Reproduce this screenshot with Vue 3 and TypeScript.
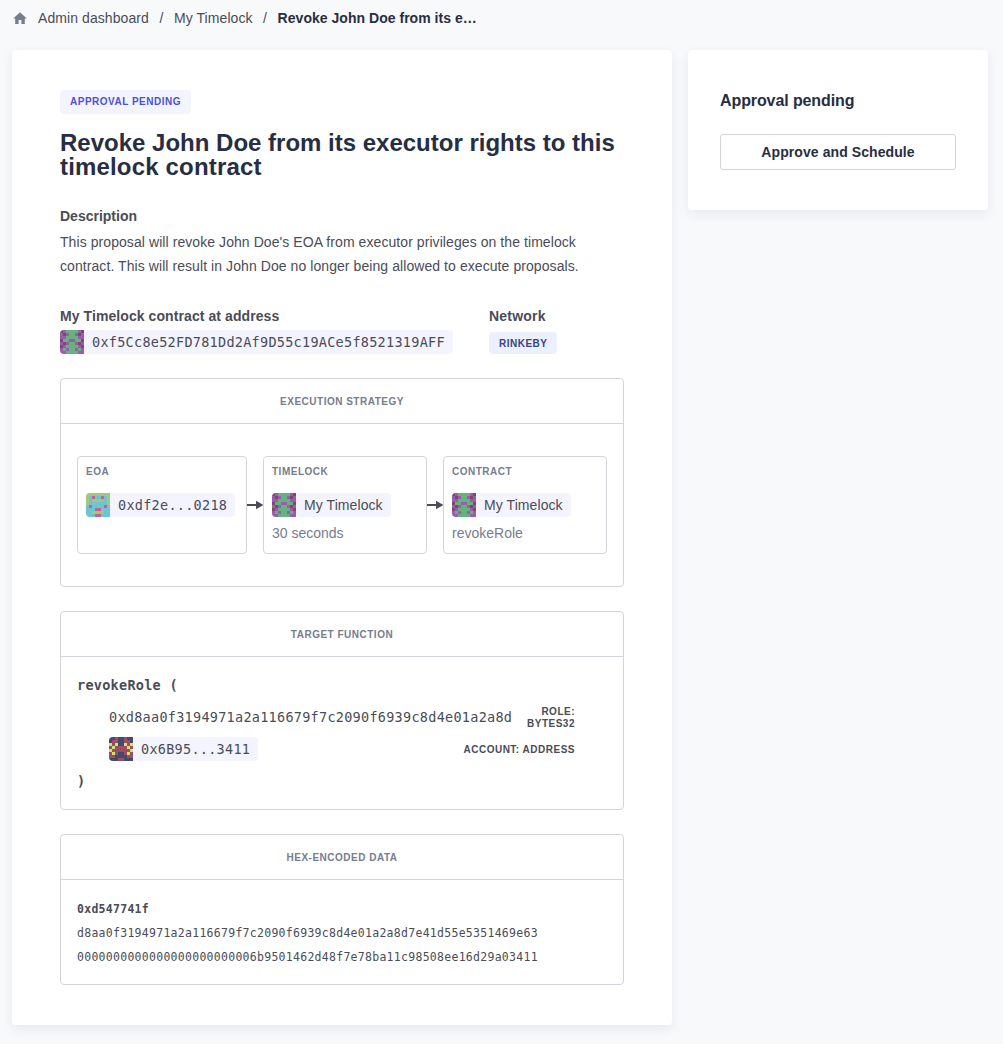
<script setup lang="ts">
import { defineComponent, h } from 'vue'

interface Pattern { colors: Record<string, string>; rows: string[] }

// Each row holds the left half of an 8x8 identicon; the right half mirrors it.
const patterns: Record<string, Pattern> = {
  timelock: {
    colors: { P: '#9a5bb0', G: '#66b27e', D: '#7c4a68' },
    rows: ['DPGG', 'PDPG', 'PPGG', 'DGGP', 'PDPG', 'DPGG', 'PGPG', 'PPGG'],
  },
  eoa: {
    colors: { P: '#6fc3d3', G: '#a3c877', D: '#c5608f' },
    rows: ['GGGG', 'GPDP', 'GPGG', 'GPPP', 'PDPP', 'PPPD', 'PPGG', 'PPPD'],
  },
  account: {
    colors: { P: '#434b6b', G: '#c3ea6b', D: '#a04c66' },
    rows: ['PPDP', 'PDDP', 'GDGP', 'DGDD', 'GDDD', 'DGDP', 'DDPP', 'PPPD'],
  },
}

const Identicon = defineComponent({
  props: { kind: { type: String, required: true } },
  setup(props) {
    return () => {
      const p = patterns[props.kind]
      const cells = p.rows.flatMap((row, y) =>
        [...row, ...[...row].reverse()].map((c, x) =>
          h('rect', { x: x * 3, y: y * 3, width: 3, height: 3, fill: p.colors[c] })))
      return h('svg', { class: 'identicon', width: 24, height: 24, viewBox: '0 0 24 24' }, cells)
    }
  },
})

const steps = [
  { title: 'EOA', icon: 'eoa', name: '0xdf2e...0218', mono: true, note: '', width: 170 },
  { title: 'TIMELOCK', icon: 'timelock', name: 'My Timelock', mono: false, note: '30 seconds', width: 164 },
  { title: 'CONTRACT', icon: 'timelock', name: 'My Timelock', mono: false, note: 'revokeRole', width: 164 },
]
</script>

<template>
  <div class="page">
    <nav class="crumbs">
      <svg class="home" width="14" height="13" viewBox="0 0 14 13"><path d="M7 .2 13.8 6.6H11.8V12H8.4V8H5.6V12H2.2V6.6H.2Z" /></svg>
      <span class="c1">Admin dashboard</span><span class="slash">/</span>
      <span class="c2">My Timelock</span><span class="slash">/</span>
      <b class="c3">Revoke John Doe from its e…</b>
    </nav>
    <div class="columns">
      <main class="card main">
        <span class="badge pending"><span>APPROVAL PENDING</span></span>
        <h1><span class="t1">Revoke John Doe from its executor rights to this</span><br><span class="t2">timelock contract</span></h1>
        <h2 class="d">Description</h2>
        <p class="desc"><span>This proposal will revoke John Doe's EOA from executor privileges on the timelock</span><br><span>contract. This will result in John Doe no longer being allowed to execute proposals.</span></p>
        <div class="meta">
          <div class="addr">
            <h2>My Timelock contract at address</h2>
            <span class="chip mono"><Identicon kind="timelock" /><span>0xf5Cc8e52FD781Dd2Af9D55c19ACe5f8521319AFF</span></span>
          </div>
          <div>
            <h2 class="net">Network</h2>
            <span class="badge network"><span>RINKEBY</span></span>
          </div>
        </div>

        <section class="panel strategy">
          <header>EXECUTION STRATEGY</header>
          <div class="flow">
            <template v-for="(s, i) in steps" :key="i">
              <svg v-if="i" class="arrow" width="16" height="10" viewBox="0 0 16 10"><path d="M0 4H9V.8L16.5 5 9 9.2V6H0Z" /></svg>
              <div class="step" :style="{ width: s.width + 'px' }">
                <h3>{{ s.title }}</h3>
                <span class="chip" :class="{ mono: s.mono }"><Identicon :kind="s.icon" /><span>{{ s.name }}</span></span>
                <div class="note">{{ s.note }}</div>
              </div>
            </template>
          </div>
        </section>

        <section class="panel target">
          <header>TARGET FUNCTION</header>
          <div class="code mono">
            <div class="line"><b>revokeRole (</b></div>
            <div class="arg"><span>0xd8aa0f3194971a2a116679f7c2090f6939c8d4e01a2a8d</span><span class="type">ROLE:<br>BYTES32</span></div>
            <div class="arg"><span class="chip"><Identicon kind="account" /><span>0x6B95...3411</span></span><span class="type">ACCOUNT: ADDRESS</span></div>
            <div class="line"><b>)</b></div>
          </div>
        </section>

        <section class="panel hex">
          <header>HEX-ENCODED DATA</header>
          <div class="data mono">
            <b>0xd547741f</b>
            <span>d8aa0f3194971a2a116679f7c2090f6939c8d4e01a2a8d7e41d55e5351469e63</span>
            <span>0000000000000000000000006b9501462d48f7e78ba11c98508ee16d29a03411</span>
          </div>
        </section>
      </main>
      <aside class="card side">
        <h2>Approval pending</h2>
        <button type="button">Approve and Schedule</button>
      </aside>
    </div>
  </div>
</template>

<style>
body { background: #f8f9fb; }
</style>

<style scoped>
.page { box-sizing: border-box; width: 1003px; height: 1044px; overflow: hidden; background: #f8f9fb; color: #4a4c58; font: 14px/24px "Liberation Sans", Arial, sans-serif; letter-spacing: .08px; white-space: nowrap; }
h1, h2, h3, p { margin: 0; }
.mono { font-family: "DejaVu Sans Mono", monospace; font-size: 13.5px; letter-spacing: .273px; }
.crumbs { display: flex; height: 50px; padding: 6px 13px 0; box-sizing: border-box; }
.crumbs b { color: #272e42; letter-spacing: .03px; }
.home { margin: 6px 11px 0 0; fill: #757d8f; }
.slash { width: 25px; text-align: center; }
.columns { display: flex; align-items: flex-start; gap: 16px; padding-left: 12px; }
.card { box-sizing: border-box; background: #fff; border-radius: 4px; box-shadow: 0 4px 12px rgba(30, 40, 60, .08); }
.main { width: 660px; height: 975px; padding: 40px 48px; }
.badge { display: flex; align-items: center; box-sizing: border-box; border-radius: 4px; background: #f4f4ff; font-size: 10px; font-weight: 700; padding-left: 10px; letter-spacing: .5px; }
.pending { width: 131px; height: 24px; color: #4b50dc; }
.network { width: 68px; height: 22px; margin-top: 2px; padding-top: 1px; background: #eceffc; color: #3a4388; }
h1 { margin-top: 17px; font-size: 24px; line-height: 24px; color: #272e42; letter-spacing: 0; }
.t2 { letter-spacing: .17px; }
h2 { font-size: 14px; line-height: 24px; }
.d { margin-top: 25px; letter-spacing: 0; }
.net { letter-spacing: .2px; }
.desc { margin-top: 2px; letter-spacing: .073px; }
.meta { display: flex; margin-top: 26px; height: 50px; }
.addr { width: 429px; }
.meta h2 { margin-bottom: 2px; }
.meta h2.net { margin-bottom: 4px; }
.chip { display: inline-flex; height: 24px; border-radius: 4px; overflow: hidden; background: #f4f4ff; padding-right: 8px; gap: 8px; vertical-align: top; }
.identicon { flex: none; }
.panel { box-sizing: border-box; margin-top: 24px; border: 1px solid #d3d4dc; border-radius: 4px; }
.panel header { height: 44px; border-bottom: 1px solid #d3d4dc; text-align: center; font-size: 10px; font-weight: 700; line-height: 45px; letter-spacing: .5px; color: #757d8f; }
.strategy { height: 209px; }
.flow { display: flex; align-items: center; padding: 32px 16px; }
.step { box-sizing: border-box; height: 98px; border: 1px solid #d3d4dc; border-radius: 4px; padding: 9px 8px 7px; flex: none; }
.step h3 { font-size: 10px; line-height: 12px; letter-spacing: .5px; color: #757d8f; margin-bottom: 15px; }
.note { margin-top: 4px; color: #757d8f; letter-spacing: 0; }
.arrow { flex: none; fill: #4a4c58; }
.target { height: 199px; }
.code { padding: 16px; }
.line { line-height: 24px; }
.arg { display: flex; align-items: center; justify-content: space-between; height: 24px; margin: 8px 32px; }
.type { margin-top: 2px; font: 700 10px/12px "Liberation Sans", Arial, sans-serif; letter-spacing: .5px; text-align: right; }
.hex { height: 151px; }
.data { display: flex; flex-direction: column; padding: 17px 16px; font-size: 11.5px; letter-spacing: .277px; }
.side { width: 300px; height: 160px; padding: 39px 32px; }
.side h2 { font-size: 16px; letter-spacing: -.1px; color: #272e42; }
.side button { display: block; width: 236px; height: 36px; margin-top: 21px; padding: 0; border: 1px solid #d3d4dc; border-radius: 3px; background: #fff; color: #272e42; font: 700 14px/34px "Liberation Sans", Arial, sans-serif; letter-spacing: .08px; }
</style>
